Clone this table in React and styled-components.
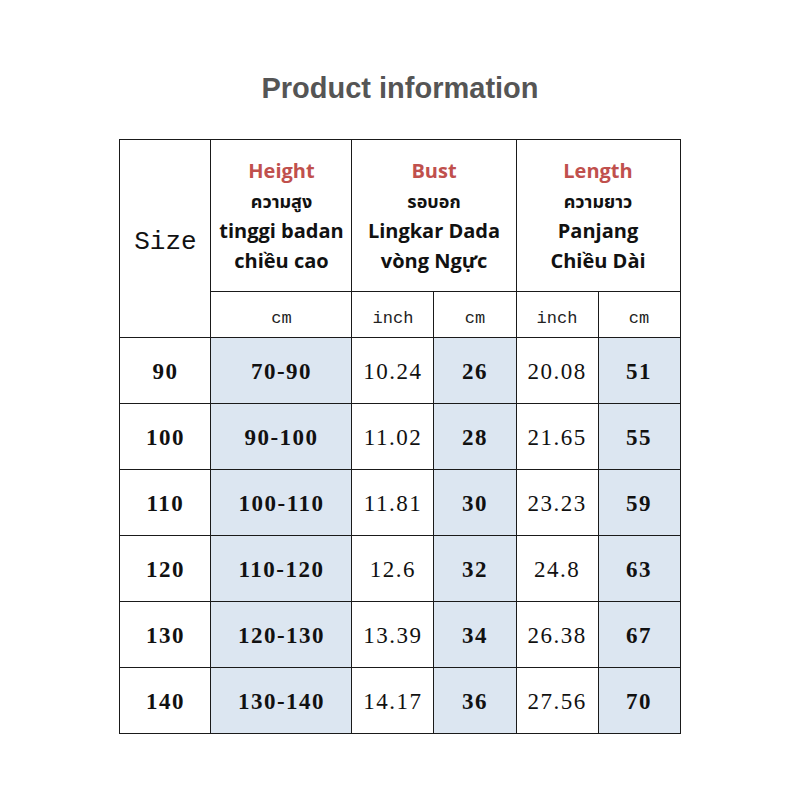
import React from 'react';
import styled, { createGlobalStyle } from 'styled-components';

const GlobalStyle = createGlobalStyle`
  html, body {
    margin: 0;
    padding: 0;
    background: #ffffff;
  }
`;

const Page = styled.div`
  width: 800px;
  height: 800px;
  padding-top: 70px;
  box-sizing: border-box;
  display: flex;
  flex-direction: column;
  align-items: center;
`;

const Title = styled.h1`
  margin: 0 0 33px;
  font-family: "Liberation Sans", Arial, sans-serif;
  font-weight: 700;
  font-size: 29px;
  line-height: 36px;
  color: #555555;
`;

const Table = styled.table`
  width: 561px;
  border-collapse: collapse;
  table-layout: fixed;

  td, th {
    border: 1px solid #1a1a1a;
    padding: 0;
    text-align: center;
    vertical-align: middle;
  }
`;

const HeadRow = styled.tr`
  height: 152px;
`;

const SubRow = styled.tr`
  height: 46px;
`;

const DataRow = styled.tr`
  height: 66px;
`;

const SizeHead = styled.th`
  font-family: "Liberation Mono", "Courier New", monospace;
  font-weight: 400;
  font-size: 26px;
  color: #111;

  && {
    padding-top: 6px;
  }
`;

const GroupHead = styled.th`
  font-family: "Open Sans", "Noto Sans", sans-serif;
  font-weight: 700;
  font-size: 20px;
  line-height: 30px;
  color: #111;
`;

const Red = styled.div`
  color: #c0504d;
`;

const Thai = styled.div`
  font-family: "Noto Sans", "Noto Sans Thai", sans-serif;
  font-size: 18px;
  font-weight: 700;
`;

const Unit = styled.td`
  font-family: "Liberation Mono", "Courier New", monospace;
  font-size: 17px;
  color: #222;

  && {
    padding-top: 8px;
  }
`;

const Cell = styled.td`
  font-family: "Liberation Serif", "Times New Roman", serif;
  font-size: 23px;
  letter-spacing: 1.5px;
  font-weight: ${({ $light }) => ($light ? 400 : 700)};
  color: #111;
  background: ${({ $tint }) => ($tint ? '#dce6f1' : '#ffffff')};

  && {
    padding-top: 3px;
  }
`;

const rows = [
  ['90', '70-90', '10.24', '26', '20.08', '51'],
  ['100', '90-100', '11.02', '28', '21.65', '55'],
  ['110', '100-110', '11.81', '30', '23.23', '59'],
  ['120', '110-120', '12.6', '32', '24.8', '63'],
  ['130', '120-130', '13.39', '34', '26.38', '67'],
  ['140', '130-140', '14.17', '36', '27.56', '70'],
];

const App = () => (
  <>
    <GlobalStyle />
    <Page>
      <Title>Product information</Title>
      <Table>
        <colgroup>
          <col style={{ width: 91 }} />
          <col style={{ width: 141 }} />
          <col style={{ width: 82 }} />
          <col style={{ width: 82 }} />
          <col style={{ width: 82 }} />
          <col style={{ width: 82 }} />
        </colgroup>
        <thead>
          <HeadRow>
            <SizeHead rowSpan={2}>Size</SizeHead>
            <GroupHead>
              <Red>Height</Red>
              <Thai>ความสูง</Thai>
              <div>tinggi badan</div>
              <div>chiều cao</div>
            </GroupHead>
            <GroupHead colSpan={2}>
              <Red>Bust</Red>
              <Thai>รอบอก</Thai>
              <div>Lingkar Dada</div>
              <div>vòng Ngực</div>
            </GroupHead>
            <GroupHead colSpan={2}>
              <Red>Length</Red>
              <Thai>ความยาว</Thai>
              <div>Panjang</div>
              <div>Chiều Dài</div>
            </GroupHead>
          </HeadRow>
          <SubRow>
            <Unit>cm</Unit>
            <Unit>inch</Unit>
            <Unit>cm</Unit>
            <Unit>inch</Unit>
            <Unit>cm</Unit>
          </SubRow>
        </thead>
        <tbody>
          {rows.map((r) => (
            <DataRow key={r[0]}>
              <Cell>{r[0]}</Cell>
              <Cell $tint>{r[1]}</Cell>
              <Cell $light>{r[2]}</Cell>
              <Cell $tint>{r[3]}</Cell>
              <Cell $light>{r[4]}</Cell>
              <Cell $tint>{r[5]}</Cell>
            </DataRow>
          ))}
        </tbody>
      </Table>
    </Page>
  </>
);

export default App;
